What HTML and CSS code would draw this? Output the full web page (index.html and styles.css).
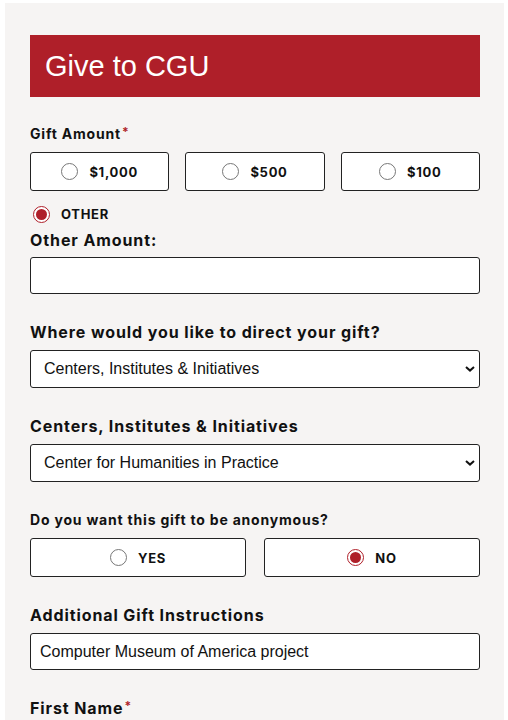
FILE: index.html
```html
<!DOCTYPE html>
<html lang="en">
<head>
<meta charset="utf-8">
<title>Give to CGU</title>
<link rel="stylesheet" href="styles.css">
</head>
<body>
<div class="panel">
  <h1 class="banner">Give to CGU</h1>

  <div class="label label-sm gift-label">Gift Amount<span class="req">*</span></div>
  <div class="amounts">
    <label class="choice"><span class="radio"></span><span class="choice-text">$1,000</span></label>
    <label class="choice"><span class="radio"></span><span class="choice-text">$500</span></label>
    <label class="choice"><span class="radio"></span><span class="choice-text">$100</span></label>
  </div>
  <label class="other"><span class="radio checked"></span><span class="choice-text">OTHER</span></label>

  <div class="label other-label">Other Amount:</div>
  <div class="field"></div>

  <div class="label section">Where would you like to direct your gift?</div>
  <div class="select"><span>Centers, Institutes &amp; Initiatives</span>
    <svg class="chev" width="10" height="6" viewBox="0 0 10 6"><path d="M1 1 L5 4.6 L9 1" fill="none" stroke="#111" stroke-width="2"/></svg>
  </div>

  <div class="label section">Centers, Institutes &amp; Initiatives</div>
  <div class="select"><span>Center for Humanities in Practice</span>
    <svg class="chev" width="10" height="6" viewBox="0 0 10 6"><path d="M1 1 L5 4.6 L9 1" fill="none" stroke="#111" stroke-width="2"/></svg>
  </div>

  <div class="label label-sm section">Do you want this gift to be anonymous?</div>
  <div class="yesno">
    <label class="choice"><span class="radio"></span><span class="choice-text">YES</span></label>
    <label class="choice"><span class="radio checked"></span><span class="choice-text">NO</span></label>
  </div>

  <div class="label section">Additional Gift Instructions</div>
  <div class="field text-field">Computer Museum of America project</div>

  <div class="label section">First Name<span class="req">*</span></div>
</div>
</body>
</html>
```
FILE: styles.css
```css
html, body {
  margin: 0;
  padding: 0;
  background: #ffffff;
}
body {
  font-family: "Liberation Sans", Arial, sans-serif;
  color: #111;
  height: 720px;
  overflow: hidden;
}
.panel {
  margin: 3px 4px 0 5px;
  padding: 32px 24px 0 25px;
  background: #f6f4f3;
  height: 717px;
  box-sizing: border-box;
}
.banner {
  margin: 0;
  height: 62px;
  background: #af1f29;
  color: #fff;
  font-family: "Liberation Sans", Arial, sans-serif;
  font-weight: 400;
  font-size: 29px;
  line-height: 62px;
  padding-left: 15px;
}
.label {
  font-family: Inter, "Open Sans", sans-serif;
  font-weight: 700;
  font-size: 16px;
  line-height: 20px;
  height: 20px;
  color: #111;
  letter-spacing: 0.9px;
}
.label-sm {
  font-size: 14px;
  letter-spacing: 0.8px;
}
.req {
  color: #af1f29;
  font-size: 12px;
  vertical-align: top;
  margin-left: 1px;
  position: relative;
  top: -2px;
}
.gift-label { margin-top: 27px; }
.section { margin-top: 28px; }
.amounts {
  margin-top: 8px;
  display: grid;
  grid-template-columns: 1fr 1fr 1fr;
  gap: 16px;
}
.yesno {
  margin-top: 8px;
  display: grid;
  grid-template-columns: 1fr 1fr;
  gap: 18px;
}
.choice {
  height: 39px;
  box-sizing: border-box;
  border: 1px solid #222;
  border-radius: 3px;
  background: #fff;
  display: flex;
  align-items: center;
  justify-content: center;
  gap: 11px;
}
.choice-text {
  font-family: Inter, "Open Sans", sans-serif;
  font-weight: 700;
  font-size: 13px;
  letter-spacing: 0.7px;
  color: #111;
}
.radio {
  width: 17px;
  height: 17px;
  box-sizing: border-box;
  border-radius: 50%;
  border: 1px solid #777;
  background: #fff;
  display: flex;
  align-items: center;
  justify-content: center;
}
.radio.checked {
  border: 1.5px solid #af1f29;
}
.radio.checked::after {
  content: "";
  width: 11px;
  height: 11px;
  border-radius: 50%;
  background: #af1f29;
}
.other {
  margin-top: 13px;
  height: 20px;
  display: flex;
  align-items: center;
  gap: 11px;
  padding-left: 3px;
}
.other-label { margin-top: 6px; }
.field {
  margin-top: 7px;
  height: 37px;
  box-sizing: border-box;
  border: 1px solid #222;
  border-radius: 3px;
  background: #fff;
}
.text-field {
  margin-top: 8px;
  padding-left: 9px;
  font-size: 16px;
  line-height: 35px;
  color: #111;
}
.select {
  margin-top: 8px;
  height: 38px;
  box-sizing: border-box;
  border: 1px solid #222;
  border-radius: 3px;
  background: #fff;
  display: flex;
  align-items: center;
  justify-content: space-between;
  padding: 0 4px 0 13px;
  font-size: 16px;
  color: #111;
}
.chev { display: block; }
```
